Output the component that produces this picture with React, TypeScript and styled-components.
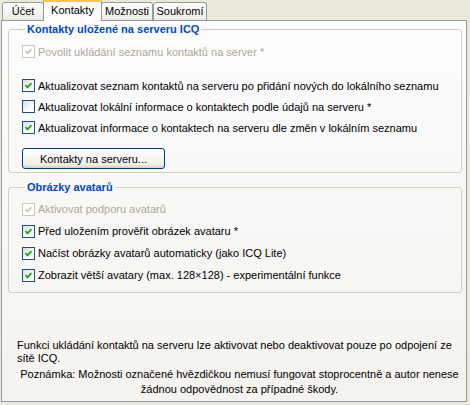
import React from "react";
import styled, { createGlobalStyle } from "styled-components";

const GlobalStyle = createGlobalStyle`
  html, body {
    margin: 0;
    padding: 0;
    background: #ece9d8;
  }
  body {
    font-family: "Liberation Sans", Arial, sans-serif;
    font-size: 11px;
    color: #000;
  }
`;

const Window = styled.div`
  width: 470px;
  height: 405px;
  box-sizing: border-box;
  padding: 0 3px 3px 1px;
  display: flex;
  flex-direction: column;
`;

const TabStrip = styled.div`
  display: flex;
  align-items: flex-end;
  height: 21px;
  padding-left: 1px;
  margin-bottom: -1px;
  position: relative;
  z-index: 1;
`;

const Tab = styled.div<{ $w: number; $active?: boolean }>`
  box-sizing: border-box;
  width: ${(p) => p.$w}px;
  height: ${(p) => (p.$active ? 22 : 19)}px;
  margin: 0 ${(p) => (p.$active ? -1 : 0)}px;
  border: 1px solid #919b9c;
  border-bottom: ${(p) => (p.$active ? "none" : "1px solid #919b9c")};
  border-top: ${(p) => (p.$active ? "3px solid #ffc83c" : "1px solid #919b9c")};
  border-radius: 3px 3px 0 0;
  background: ${(p) =>
    p.$active ? "#fcfcfe" : "linear-gradient(to bottom, #ffffff, #ecebe6)"};
  display: flex;
  align-items: center;
  justify-content: center;
  line-height: 13px;
  padding-bottom: ${(p) => (p.$active ? 2 : 0)}px;
  position: relative;
  z-index: ${(p) => (p.$active ? 2 : 0)};
`;

const Panel = styled.div`
  flex: 1;
  border: 1px solid #919b9c;
  background: linear-gradient(to bottom, #fcfcfe, #f4f3ee);
  padding: 2px 4px 4px 6px;
  display: flex;
  flex-direction: column;
`;

const GroupBox = styled.fieldset<{ $gapTop?: number; $pad: string }>`
  margin: ${(p) => p.$gapTop ?? 0}px 0 0 0;
  border: 1px solid #d0d0bf;
  border-radius: 3px;
  padding: ${(p) => p.$pad};
  min-width: 0;

  legend {
    color: #0046d5;
    font-weight: bold;
    line-height: 13px;
    padding: 0 2px;
    margin-left: 3px;
  }
`;

const Row = styled.label<{ $disabled?: boolean; $after?: number; $h?: number }>`
  display: flex;
  align-items: center;
  gap: 3px;
  height: ${(p) => p.$h ?? 21}px;
  margin-bottom: ${(p) => p.$after ?? 0}px;
  color: ${(p) => (p.$disabled ? "#aca899" : "#000")};
  white-space: nowrap;
`;

const Box = styled.span<{ $disabled?: boolean }>`
  box-sizing: border-box;
  width: 13px;
  height: 13px;
  flex: none;
  border: 1px solid ${(p) => (p.$disabled ? "#cac8bb" : "#1c5180")};
  background: ${(p) =>
    p.$disabled ? "#ffffff" : "linear-gradient(135deg, #dcdcd7, #ffffff 70%)"};
  display: flex;
  align-items: center;
  justify-content: center;
`;

const Button = styled.button`
  box-sizing: border-box;
  width: 143px;
  height: 21px;
  margin-top: 10px;
  border: 1px solid #003c74;
  border-radius: 3px;
  background: linear-gradient(to bottom, #ffffff, #f0f0ea 80%, #d6d0c5);
  font: inherit;
  color: #000;
  padding: 0;
`;

const Notes = styled.div`
  margin-top: auto;
  padding: 0 0 0 9px;
`;

const Note = styled.p<{ $center?: boolean }>`
  margin: 0 0 ${(p) => (p.$center ? 0 : 2)}px;
  text-align: ${(p) => (p.$center ? "center" : "left")};
  line-height: ${(p) => (p.$center ? 15 : 13)}px;
`;

const CheckMark = ({ disabled }: { disabled?: boolean }) => (
  <svg width="7" height="7" viewBox="0 0 7 7">
    <path
      d="M0.5 3 L2.5 5.3 L6.5 1.2"
      fill="none"
      stroke={disabled ? "#cac8bb" : "#21a121"}
      strokeWidth="1.9"
    />
  </svg>
);

const Check = ({
  checked,
  disabled,
  after,
  h,
  children,
}: {
  checked?: boolean;
  disabled?: boolean;
  after?: number;
  h?: number;
  children: React.ReactNode;
}) => (
  <Row $disabled={disabled} $after={after} $h={h}>
    <Box $disabled={disabled}>{checked && <CheckMark disabled={disabled} />}</Box>
    {children}
  </Row>
);

export default function App() {
  return (
    <>
      <GlobalStyle />
      <Window>
        <TabStrip>
          <Tab $w={42}>Účet</Tab>
          <Tab $w={59} $active>
            Kontakty
          </Tab>
          <Tab $w={52}>Možnosti</Tab>
          <Tab $w={54}>Soukromí</Tab>
        </TabStrip>
        <Panel>
          <GroupBox $pad="5px 8px 3px 13px">
            <legend>Kontakty uložené na serveru ICQ</legend>
            <Check checked disabled after={13}>
              Povolit ukládání seznamu kontaktů na server *
            </Check>
            <Check checked>
              Aktualizovat seznam kontaktů na serveru po přidání nových do lokálního seznamu
            </Check>
            <Check>Aktualizovat lokální informace o kontaktech podle údajů na serveru *</Check>
            <Check checked>
              Aktualizovat informace o kontaktech na serveru dle změn v lokálním seznamu
            </Check>
            <Button>Kontakty na serveru...</Button>
          </GroupBox>
          <GroupBox $gapTop={8} $pad="4px 8px 6px 13px">
            <legend>Obrázky avatarů</legend>
            <Check checked disabled h={22}>
              Aktivovat podporu avatarů
            </Check>
            <Check checked h={22}>
              Před uložením prověřit obrázek avataru *
            </Check>
            <Check checked h={22}>
              Načíst obrázky avatarů automaticky (jako ICQ Lite)
            </Check>
            <Check checked h={22}>
              Zobrazit větší avatary (max. 128×128) - experimentální funkce
            </Check>
          </GroupBox>
          <Notes>
            <Note>
              Funkci ukládání kontaktů na serveru lze aktivovat nebo deaktivovat pouze po
              odpojení ze sítě ICQ.
            </Note>
            <Note $center>
              Poznámka: Možnosti označené hvězdičkou nemusí fungovat stoprocentně a autor
              nenese žádnou odpovědnost za případné škody.
            </Note>
          </Notes>
        </Panel>
      </Window>
    </>
  );
}
